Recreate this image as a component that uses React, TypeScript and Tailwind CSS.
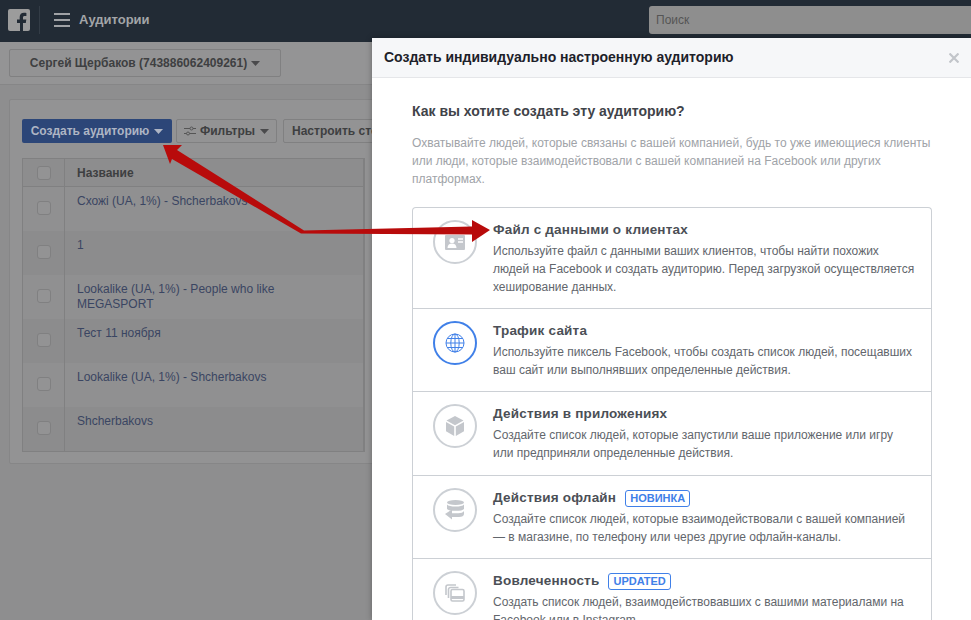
import React from "react";

const rows = [
  { name: "Схожі (UA, 1%) - Shcherbakovs", bg: "bg-[#909091]" },
  { name: "1", bg: "bg-[#8c8c8d]" },
  { name: "Lookalike (UA, 1%) - People who like MEGASPORT", bg: "bg-[#909091]" },
  { name: "Тест 11 ноября", bg: "bg-[#8c8c8d]" },
  { name: "Lookalike (UA, 1%) - Shcherbakovs", bg: "bg-[#909091]" },
  { name: "Shcherbakovs", bg: "bg-[#8c8c8d]" },
];

function Caret({ className }: { className: string }) {
  return (
    <svg width="9" height="5" viewBox="0 0 9 5" className={className}>
      <path d="M0 0h9L4.5 5z" fill="currentColor" />
    </svg>
  );
}

function Check() {
  return <div className="h-[14px] w-[14px] rounded-[3px] border border-[#808081] bg-[#939394]" />;
}

function Circle({ children, blue }: { children: React.ReactNode; blue?: boolean }) {
  return (
    <div
      className={
        "-mt-[1px] flex h-[44px] w-[44px] shrink-0 items-center justify-center rounded-full border-2 " +
        (blue ? "border-[#4080e8]" : "border-[#ccd0d5]")
      }
    >
      {children}
    </div>
  );
}

function Option({
  title,
  badge,
  lines,
  icon,
  blue,
  className,
}: {
  title: string;
  badge?: string;
  lines: string[];
  icon: React.ReactNode;
  blue?: boolean;
  className: string;
}) {
  return (
    <div className={"flex gap-[16px] border-b border-[#ccd0d5] pl-[20px] " + className}>
      <Circle blue={blue}>{icon}</Circle>
      <div className="min-w-0">
        <div className="flex h-[18px] items-center gap-[9px]">
          <span className="text-[13.5px] font-bold tracking-[0.2px] text-[#4b4f56]">{title}</span>
          {badge && (
            <span className="rounded-[3px] border border-[#4080e8] px-[4px] text-[11px] leading-[15px] font-bold text-[#4080e8]">
              {badge}
            </span>
          )}
        </div>
        <div className="mt-[3px] text-[12px] leading-[18px] text-[#62666c]">
          {lines.map((l) => (
            <div key={l} className="whitespace-nowrap">
              {l}
            </div>
          ))}
        </div>
      </div>
    </div>
  );
}

export default function App() {
  return (
    <div
      className="relative h-[620px] w-[971px] overflow-hidden bg-[#8e8e8f] text-[12px] text-[#333]"
      style={{ fontFamily: '"Liberation Sans", Arial, sans-serif' }}
    >
      {/* top bar */}
      <header className="flex h-[42px] items-center bg-[#222b35] pb-[2px] pl-[8px]">
        <div className="flex h-[22px] w-[22px] items-end justify-end overflow-hidden rounded-[2px] bg-[#9c9c9c]">
          <svg width="22" height="22" viewBox="0 0 22 22">
            <path
              d="M15 22v-8h2.800l.5-3.400H15V8.600c0-1 .4-1.600 1.700-1.600h1.700V4c-.5-.1-1.400-.2-2.400-.2-2.600 0-4.300 1.500-4.300 4.300v2.500H9V14h3v8z"
              fill="#222b35"
            />
          </svg>
        </div>
        <div className="ml-[9px] h-[28px] w-px bg-[#333c46]" />
        <div className="ml-[14px] flex w-[16px] flex-col gap-[4px]">
          <div className="h-[2px] bg-[#a0a2a5]" />
          <div className="h-[2px] bg-[#a0a2a5]" />
          <div className="h-[2px] bg-[#a0a2a5]" />
        </div>
        <div className="ml-[9px] text-[13px] font-bold text-[#a3a5a8]">Аудитории</div>
        <div className="ml-auto flex h-[28px] w-[322px] items-center rounded-l-[3px] bg-[#8e8e8e] pl-[7px] text-[12px] text-[#555]">
          Поиск
        </div>
      </header>

      {/* account bar */}
      <div className="flex h-[43px] items-center border-b border-[#868687] bg-[#949495] pl-[9px]">
        <div className="flex h-[28px] w-[272px] items-center justify-center gap-[4px] rounded-[2px] border border-[#808081] bg-[#939394] text-[12px] font-bold text-[#3e3f41]">
          Сергей Щербаков (743886062409261)
          <Caret className="text-[#4a4a4c]" />
        </div>
      </div>

      {/* panel */}
      <div className="mx-[9px] mt-[14px] w-[400px] rounded-[2px] border border-[#868687] bg-[#939394] pt-[19px] pb-[11px] pl-[12px]">
        <div className="flex h-[24px] items-stretch gap-[4px] whitespace-nowrap">
          <div className="flex w-[150px] shrink-0 items-center justify-center gap-[5px] rounded-[2px] bg-[#2c4678] text-[12px] font-bold text-[#aeb5c4]">
            Создать аудиторию
            <Caret className="text-[#aeb5c4]" />
          </div>
          <div className="flex w-[101px] shrink-0 items-center justify-center gap-[4px] rounded-[2px] border border-[#808081] bg-[#939394] font-bold text-[#3e3f41]">
            <svg width="12" height="10" viewBox="0 0 12 10" fill="none" stroke="#555" strokeWidth="1">
              <path d="M0 2.500h6M9 2.500h3M0 7.500h2.500M5.500 7.500H12" />
              <circle cx="7.500" cy="2.500" r="1.500" />
              <circle cx="4" cy="7.500" r="1.500" />
            </svg>
            Фильтры
            <Caret className="ml-[1px] text-[#4a4a4c]" />
          </div>
          <div className="ml-[2px] flex w-[150px] shrink-0 items-center rounded-[2px] border border-[#808081] bg-[#939394] pl-[8px] font-bold text-[#3e3f41]">
            Настроить столбцы
          </div>
        </div>

        <div className="mt-[15px] w-[343px] border border-[#808081]">
          <div className="flex h-[28px] border-b border-[#808081] bg-[#8d8d8e]">
            <div className="flex w-[42px] items-center justify-center border-r border-[#808081]">
              <Check />
            </div>
            <div className="flex flex-1 items-center border-r border-[#808081] pl-[12px] font-bold text-[#3e3f41]">
              Название
            </div>
          </div>
          {rows.map((r) => (
            <div key={r.name} className={"flex h-[44px] " + r.bg}>
              <div className="flex w-[42px] items-center justify-center border-r border-[#808081] pb-[2px]">
                <Check />
              </div>
              <div className="flex-1 border-r border-[#808081] pt-[7px] pr-[60px] pl-[12px] leading-[15px] text-[#3a4562]">
                {r.name}
              </div>
            </div>
          ))}
        </div>
      </div>

      {/* modal */}
      <div className="absolute top-[38px] left-[372px] h-[582px] w-[599px] bg-white shadow-[0_0_6px_rgba(0,0,0,0.3)]">
        <div className="flex h-[40px] items-center justify-between border-b border-[#e5e6e9] bg-[#f6f7f9] pr-[12px] pl-[12px]">
          <div className="text-[14px] font-bold text-[#1d2129]">Создать индивидуально настроенную аудиторию</div>
          <svg width="10" height="10" viewBox="0 0 10 10" stroke="#c2c5ca" strokeWidth="2.200">
            <path d="M0.500 0.500l9 9M9.500 0.500l-9 9" />
          </svg>
        </div>
        <div className="pt-[24px] pl-[40px]">
          <div className="text-[14px] leading-[18px] font-bold text-[#3f4349]">Как вы хотите создать эту аудиторию?</div>
          <div className="mt-[14px] w-[530px] text-[12px] leading-[18px] text-[#a0a3a8]">
            <div>Охватывайте людей, которые связаны с вашей компанией, будь то уже имеющиеся клиенты</div>
            <div>или люди, которые взаимодействовали с вашей компанией на Facebook или других</div>
            <div>платформах.</div>
          </div>
          <div className="mt-[19px] h-[460px] w-[520px] overflow-hidden rounded-t-[4px] border border-b-0 border-[#ccd0d5]">
            <Option
              className="h-[101px] pt-[13px]"
              title="Файл с данными о клиентах"
              lines={[
                "Используйте файл с данными ваших клиентов, чтобы найти похожих",
                "людей на Facebook и создать аудиторию. Перед загрузкой осуществляется",
                "хеширование данных.",
              ]}
              icon={
                <svg width="20" height="15" viewBox="0 0 20 15">
                  <path
                    d="M1 0h18a1 1 0 0 1 1 1v13a1 1 0 0 1-1 1H1a1 1 0 0 1-1-1V1a1 1 0 0 1 1-1z"
                    fill="#c4c7cc"
                  />
                  <circle cx="7" cy="5.500" r="2.600" fill="#fff" />
                  <path d="M2.500 13c0-3 2-4.400 4.500-4.400s4.500 1.400 4.500 4.400z" fill="#fff" />
                  <path d="M13 4h5M13 7h5" stroke="#fff" strokeWidth="1.400" />
                </svg>
              }
            />
            <Option
              blue
              className="h-[83px] pt-[13px]"
              title="Трафик сайта"
              lines={[
                "Используйте пиксель Facebook, чтобы создать список людей, посещавших",
                "ваш сайт или выполнявших определенные действия.",
              ]}
              icon={
                <svg width="20" height="20" viewBox="0 0 20 20" fill="none" stroke="#4080e8" strokeWidth="1">
                  <circle cx="10" cy="10" r="9" />
                  <ellipse cx="10" cy="10" rx="4.200" ry="9" />
                  <path d="M10 1v18M1 10h18M2.200 5.500h15.600M2.200 14.500h15.600" />
                </svg>
              }
            />
            <Option
              className="h-[84px] pt-[13px]"
              title="Действия в приложениях"
              lines={[
                "Создайте список людей, которые запустили ваше приложение или игру",
                "или предприняли определенные действия.",
              ]}
              icon={
                <svg width="18" height="20" viewBox="0 0 18 20" fill="#c4c7cc">
                  <path d="M9 0l8.500 4.600L9 9.200.5 4.600z" />
                  <path d="M0 6l8.200 4.500V20L0 15.200z" />
                  <path d="M18 6l-8.200 4.500V20l8.200-4.800z" />
                </svg>
              }
            />
            <Option
              className="h-[83px] pt-[13px]"
              title="Действия офлайн"
              badge="НОВИНКА"
              lines={[
                "Создайте список людей, которые взаимодействовали с вашей компанией",
                "— в магазине, по телефону или через другие офлайн-каналы.",
              ]}
              icon={
                <svg width="20" height="20" viewBox="0 0 20 20" fill="#c4c7cc">
                  <ellipse cx="10.500" cy="2.500" rx="8.500" ry="2.500" />
                  <path d="M2 4.500c1 1.500 4.500 2 8.500 2s7.500-.5 8.500-2V9c-1 1.300-4 1.800-8.500 1.800S3 10.300 2 9z" />
                  <path d="M7 9.500L0 14l7 5.500V17h7c3 0 5-1 5-3v-3c-1 1.500-3 2.200-5.500 2.200H7z" />
                </svg>
              }
            />
            <Option
              className="h-[90px] border-b-0 pt-[13px]"
              title="Вовлеченность"
              badge="UPDATED"
              lines={[
                "Создать список людей, взаимодействовавших с вашими материалами на",
                "Facebook или в Instagram.",
              ]}
              icon={
                <svg width="20" height="18" viewBox="0 0 20 18" fill="none" stroke="#c4c7cc" strokeWidth="1.600">
                  <path d="M1 11V3a2 2 0 0 1 2-2h8" />
                  <path d="M3.500 14V5.500a2 2 0 0 1 2-2h8" />
                  <rect x="6" y="5.500" width="13" height="11.500" rx="1.500" />
                  <path d="M6 13.500h13" strokeWidth="3" />
                </svg>
              }
            />
          </div>
        </div>
      </div>

      {/* red arrows */}
      <svg className="pointer-events-none absolute top-0 left-0" width="971" height="620" viewBox="0 0 971 620">
        <path
          d="M163 145L182 145L177 150L304 230.500L472 226.500L472 220L490 230L472 242L472 234.500L301 233.500L172 159L170 164Z"
          fill="#b80b0b"
        />
      </svg>
    </div>
  );
}
